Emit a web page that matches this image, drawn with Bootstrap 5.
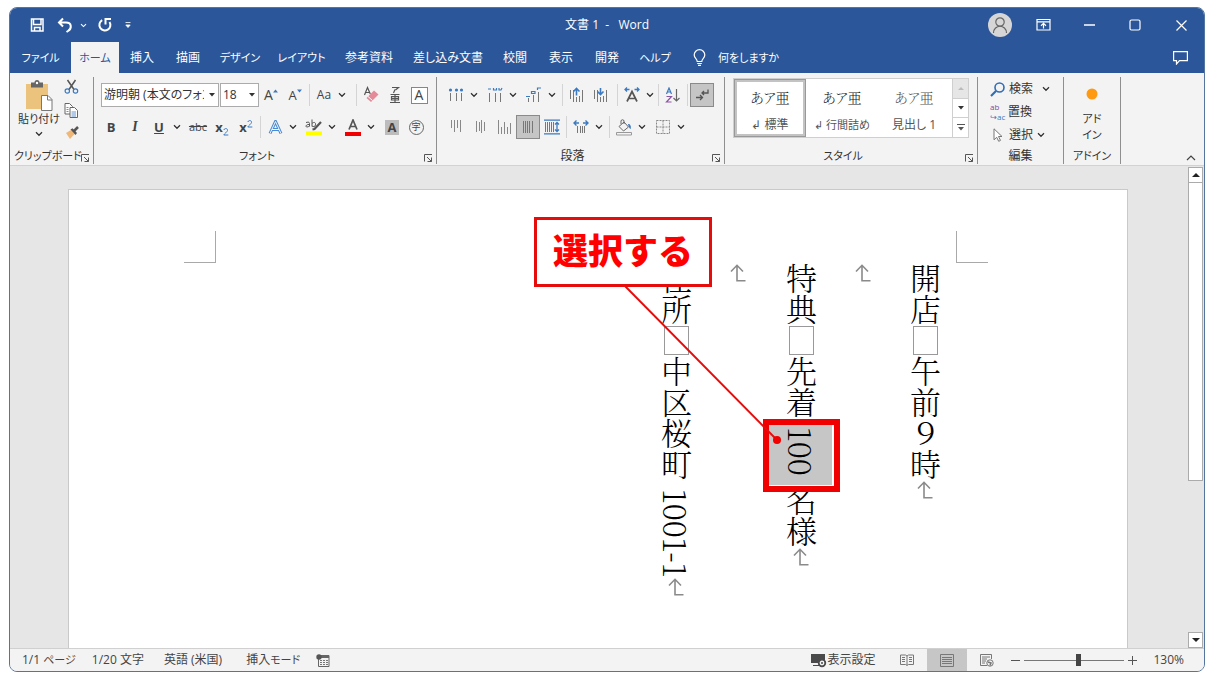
<!DOCTYPE html>
<html lang="ja">
<head>
<meta charset="utf-8">
<meta name="viewport" content="width=device-width, initial-scale=1">
<title>文書 1 - Word</title>
<link href="https://cdn.jsdelivr.net/npm/bootstrap@5.3.0/dist/css/bootstrap.min.css" rel="stylesheet">
<style>
:root{--word:#2b579a;--ink:#444;--blue:#3b7ac0}
body{font-family:"Open Sans","Noto Sans CJK JP",sans-serif;font-size:12px;line-height:16px;color:#333;background:#fff;font-feature-settings:"palt";padding:7px 9px 6px}
button{background:none;border:0;padding:0;color:inherit;font:inherit;font-feature-settings:inherit}
svg{display:block;flex:none}
.word-window{border:1px solid #54759f;border-radius:8px;overflow:hidden;background:#e6e6e6;flex:1 0 auto}
.title-row{height:34px;background:var(--word);color:#fff}
.title-side{flex:1 1 0}
.quick button{height:32px}
.win-btn{width:46px;height:32px}
.avatar{width:24px;height:24px;background:#d6d6d6}
.tab-strip{height:31px;background:var(--word);color:#fff}
.tab-grid{display:grid;grid-template-columns:61px 48px 46px 46px 58px 65px 70px 88px 46px 46px 46px 50px 30px auto}
.tab-grid button{white-space:nowrap}
.tab-grid .kana{font-size:11px}
.tab-grid .current{background:#f3f3f3;color:var(--word)}
.ribbon{height:93px;background:#f3f3f3;border-bottom:1px solid #d2d2d2;padding-top:4px}
.group{height:87px;border-right:1px solid #8f8f8f;position:relative;flex:none}
.g-clip{width:84px}.g-font{width:343px}.g-para{width:288px}.g-style{width:253px}.g-edit{width:86px}.g-add{width:57px}
.group-name{height:16px;line-height:16px;font-size:12px;white-space:nowrap}
.group-name.kana-s,.kana-s{font-size:11px}
.clip-tools{padding-top:2px}
.paste{width:42px}
.launcher{position:absolute;right:3px;bottom:1px}
.tool-rows{padding-top:6px}
.tool-row{height:24px;display:flex;align-items:center}
.tool{width:24px;height:24px;display:flex;align-items:center;justify-content:center;flex:none;white-space:nowrap;color:var(--ink)}
.chev{width:12px;height:24px;display:flex;align-items:center;justify-content:center;flex:none}
.chev+.tool{margin-left:3px}
.bar{width:1px;height:22px;background:#d4d4d4;margin:0 2px;flex:none}
.on{background:#c5c5c5;border:1px solid #8a8a8a}
.combo{position:relative;height:24px}
.combo select{appearance:none;width:100%;height:24px;border:1px solid #ababab;border-radius:0;background:#fff;padding:0 14px 0 2px;font:inherit;font-feature-settings:inherit;color:#333}
.combo svg{position:absolute;right:4px;top:10px;pointer-events:none}
.combo-font{width:118px;margin-left:2px}.combo-size{width:39px;margin-left:1px}
.latin-b{font-size:13px;font-weight:700}
.latin-l{font-size:14px}
.gallery{background:#fff;border:1px solid #cfcfcf;height:60px;margin-top:1px}
.style-item{width:72px;height:58px;color:#555;white-space:nowrap;padding-top:4px}
.style-item .sample{font-family:"Liberation Serif","Noto Serif CJK JP","Noto Sans CJK JP",serif;font-weight:300;font-size:14px;line-height:24px;display:block;color:#222}
.style-item .style-name{display:block;line-height:16px;margin-top:6px}
.style-item.picked{border:3px solid #c3c3c3;outline:1px solid #999;outline-offset:-1px}
.gal-scroll{width:16px;border-left:1px solid #cfcfcf}
.gal-scroll button{height:20px;flex:1;display:flex;align-items:center;justify-content:center}
.gal-scroll button+button{border-top:1px solid #cfcfcf}
.edit-row{height:23px;display:flex;align-items:center}
.swap{width:18px;font-size:8px;line-height:10px;text-align:left;color:#7b4a9a}
.work{flex:1 1 auto;min-height:482px}
.sheet{margin:23px 60px 0 58px;background:#fff;border:1px solid #c9c9c9;border-bottom:0;position:relative}
.crops{padding:41px 139px 0 115px}
.crop{width:32px;height:32px}
.crop-l{border-right:1px solid #a9a9a9;border-bottom:1px solid #a9a9a9}
.crop-r{border-left:1px solid #a9a9a9;border-bottom:1px solid #a9a9a9}
.story{position:relative;margin-right:171px}
.vertical{writing-mode:vertical-rl;font-family:"Noto Serif CJK JP","Noto Sans CJK JP",serif;font-weight:300;font-size:31px;line-height:62px;color:#000;font-feature-settings:normal;min-height:346px;white-space:nowrap}
.vertical p{margin:0}
.vertical svg{display:inline-block;vertical-align:baseline;margin-top:1px}
.wide{display:inline-block;width:25px;height:29px;border:1px solid #999;margin:1px 0;vertical-align:baseline}
.num-gap{margin-top:9px}
.picked-text{display:inline-block;position:relative;width:63px;height:60px;background:#c6c6c6;margin-top:7px;padding-top:2px;vertical-align:baseline}
.picked-text::after{content:"";position:absolute;top:-6px;left:-6px;right:-8px;bottom:-7px;border:6px solid #f00000}
.callout{position:absolute;right:244px;top:-46px;width:178px;height:70px;border:3px solid #e60c0c;background:#fff;color:#f00;font-family:"Noto Sans CJK JP",sans-serif;font-weight:900;font-size:35px;line-height:58px;text-align:center;font-feature-settings:normal;white-space:nowrap}
.leader{position:absolute;right:173px;top:23px}
.scroll-col{width:15px;margin:1px 1px 0 0;color:#222}
.scroll-col button{height:16px;background:#fff;border:1px solid #ababab;display:flex;align-items:center;justify-content:center}
.scroll-thumb{height:62%;background:#fff;border:1px solid #ababab;border-top:0}
.status{height:23px;background:#f3f3f3;border-top:1px solid #d0d0d0;color:#444;white-space:nowrap}
.view-btn{width:40px;height:22px;display:flex;align-items:center;justify-content:center}
.view-btn.shown{background:#c6c6c6}
.zoom-range{appearance:none;width:100px;height:14px;background:linear-gradient(#777,#777) center/100% 1px no-repeat}
.zoom-range::-webkit-slider-thumb{appearance:none;width:5px;height:12px;background:#444}
</style>
</head>
<body class="d-flex flex-column min-vh-100">
<svg width="0" height="0" class="position-absolute">
  <symbol id="cv" viewBox="0 0 8 6"><path d="M1 1.300 4 4.300 7 1.300" fill="none" stroke="currentColor" stroke-width="1.300"/></symbol>
  <symbol id="tri" viewBox="0 0 6 4"><path d="M0 0h6L3 3.500z" fill="currentColor"/></symbol>
  <symbol id="dl" viewBox="0 0 10 10"><path d="M1.500 8.500V1.500H9M4 4l4.500 4.500M8.500 4.500v4h-4" fill="none" stroke="#555"/></symbol>
  <symbol id="ret" viewBox="0 0 17 18"><path d="M15.500 16.800H7V1.500M1 7.500 7 1.300l6 6.200" fill="none" stroke="#8a8a8a" stroke-width="1.600"/></symbol>
</svg>
<div class="word-window d-flex flex-column">
  <header class="title-row d-flex align-items-center">
    <div class="quick title-side d-flex align-items-center">
      <button class="ms-3 px-1" aria-label="上書き保存"><svg width="15" height="14" viewBox="0 0 15 14" fill="none" stroke="#fff" stroke-width="1.500"><path d="M1.500 1h11.500v12h-11.500zM3.500 1.500v5h7.500v-5M4.500 13V9.500h5.500V13"/></svg></button>
      <button class="ms-1 ps-1" aria-label="元に戻す"><svg width="16" height="16" viewBox="0 0 16 16" fill="none" stroke="#fff" stroke-width="2"><path d="M6 1.500 2 5.500l4 4M2.500 5.500H9c6 0 6 6 2 8.500L9.500 15"/></svg></button>
      <button class="chev ms-1" aria-label="元に戻すの一覧"><svg width="7" height="5"><use href="#cv"/></svg></button>
      <button class="ms-1 ps-1" aria-label="繰り返し"><svg width="16" height="16" viewBox="0 0 16 16" fill="none" stroke="#fff" stroke-width="2"><path d="M5.200 3.200A5.500 5.500 0 1 0 12.500 5M8.500 7.500V2H14"/></svg></button>
      <button class="ms-2 px-1" aria-label="クイック アクセスのカスタマイズ"><svg width="6" height="6" viewBox="0 0 6 6"><path d="M.5.500h5M.8 3h4.400L3 5.500z" fill="#fff" stroke="#fff" stroke-width=".8"/></svg></button>
    </div>
    <div class="text-nowrap">文書 1 &nbsp;-&nbsp;&nbsp; Word</div>
    <div class="title-side d-flex align-items-center justify-content-end">
      <button class="avatar rounded-circle d-flex align-items-center justify-content-center me-2" aria-label="アカウント"><svg width="18" height="18" viewBox="0 0 18 18" fill="none" stroke="#666" stroke-width="1.200"><circle cx="9" cy="6" r="4.200"/><path d="M2.500 17c0-9 13-9 13 0"/></svg></button>
      <button class="win-btn d-flex align-items-center justify-content-center" aria-label="リボンの表示オプション"><svg width="15" height="12" viewBox="0 0 15 12" fill="none" stroke="#fff"><path d="M1 .5h13v10.500H1zM1 2.800h13M7.500 9.500V4.500M5 6.700l2.500-2.400L10 6.700" stroke-width="1.200"/></svg></button>
      <button class="win-btn d-flex align-items-center justify-content-center" aria-label="最小化"><svg width="11" height="2"><path d="M0 1h11" stroke="#fff" stroke-width="1.300"/></svg></button>
      <button class="win-btn d-flex align-items-center justify-content-center" aria-label="最大化"><svg width="12" height="12"><rect x="1" y="1" width="10" height="10" rx="1.500" fill="none" stroke="#fff" stroke-width="1.200"/></svg></button>
      <button class="win-btn d-flex align-items-center justify-content-center" aria-label="閉じる"><svg width="11" height="11"><path d="m.5.500 10 10m0-10-10 10" stroke="#fff" stroke-width="1.200"/></svg></button>
    </div>
  </header>
  <nav class="tab-strip d-flex justify-content-between">
    <div class="tab-grid">
      <button class="kana">ファイル</button><button class="kana current">ホーム</button><button>挿入</button><button>描画</button><button class="kana">デザイン</button><button class="kana">レイアウト</button><button>参考資料</button><button>差し込み文書</button><button>校閲</button><button>表示</button><button>開発</button><button class="kana">ヘルプ</button>
      <span class="d-flex align-items-center justify-content-center ps-2"><svg width="13" height="17" viewBox="0 0 13 17" fill="none" stroke="#fff" stroke-width="1.200"><path d="M4.200 12.500c0-2.500-3-3.200-3-6.500a5.200 5.200 0 0 1 10.600 0c0 3.300-3 4-3 6.500zM4.200 14.500h4.600M5 16.300h3"/></svg></span>
      <button class="ps-2 kana">何をしますか</button>
    </div>
    <button class="px-3" aria-label="コメント"><svg width="15" height="14" viewBox="0 0 15 14"><path d="M.6.600h13.800v9H6.500L3.500 13V9.600H.6z" fill="none" stroke="#fff" stroke-width="1.200"/></svg></button>
  </nav>
  <section class="ribbon d-flex">
    <div class="group g-clip d-flex flex-column justify-content-between">
      <div class="clip-tools d-flex">
        <button class="paste d-flex flex-column align-items-center ms-2 text-nowrap">
          <svg width="28" height="32" viewBox="0 0 28 32"><path d="M1 5h22v25H1z" fill="#ebc37c"/><path d="M6 3.500h3.500a2.500 2.500 0 0 1 5 0H18v5H6z" fill="#666"/><circle cx="12" cy="4" r="1.200" fill="#fff"/><path d="M16.500 16.500h6.500l4 4v11H16.500z" fill="#fff" stroke="#777"/><path d="M22.500 16.500v4.500H27" fill="none" stroke="#777"/></svg>
          <span class="kana-s">貼り付け</span>
          <svg class="mt-1" width="8" height="6"><use href="#cv"/></svg>
        </button>
        <div class="d-flex flex-column ms-1 gap-2">
          <button aria-label="切り取り"><svg width="15" height="16" viewBox="0 0 15 16" fill="none"><path d="M3.500 1 10 10.500M11.500 1 5 10.500" stroke="#555" stroke-width="1.500"/><circle cx="3.300" cy="12" r="2.200" stroke="#3b7ac0" stroke-width="1.200"/><circle cx="11.500" cy="12" r="2.200" stroke="#3b7ac0" stroke-width="1.200"/></svg></button>
          <button aria-label="コピー"><svg width="15" height="15" viewBox="0 0 15 15" fill="#fff" stroke="#666"><path d="M1 .5h4.500l3 3V11H1z"/><path d="M6 4.500h4.500l3 3v7H6z"/><path d="M2.500 4.500h2M2.500 6.500h2M2.500 8.500h2M7.500 9h4.500M7.500 11h4.500M7.500 13h4.500" stroke="#3b7ac0" stroke-width=".8"/></svg></button>
          <button aria-label="書式のコピー"><svg width="16" height="14" viewBox="0 0 16 14"><path d="m2 7 5-3 3.500 4L6 13z" fill="#f0b878"/><path d="m6.500 3.500 2-1.200L13 7l-1.500 2z" fill="#555"/><path d="m10 5 4-4" stroke="#555" stroke-width="2.500"/></svg></button>
        </div>
      </div>
      <div class="group-name kana-s ps-1">クリップボード</div>
      <button class="launcher" aria-label="クリップボードのオプション"><svg width="10" height="10"><use href="#dl"/></svg></button>
    </div>
    <div class="group g-font d-flex flex-column justify-content-between">
      <div class="tool-rows d-flex flex-column gap-2" style="padding-left:5px">
        <div class="tool-row">
          <div class="combo combo-font"><select aria-label="フォント"><option>游明朝 (本文のフォント)</option></select><svg width="6" height="4"><use href="#tri"/></svg></div>
          <div class="combo combo-size"><select aria-label="フォント サイズ"><option>18</option></select><svg width="6" height="4"><use href="#tri"/></svg></div>
          <button class="tool latin-l" aria-label="拡大">A<svg class="mb-2" width="5" height="4"><path d="M0 3.500 2.500.5 5 3.500z" fill="#3b7ac0"/></svg></button>
          <button class="tool latin-b fw-normal" aria-label="縮小">A<svg class="mb-2" width="5" height="4"><path d="M0 .5h5l-2.500 3z" fill="#3b7ac0"/></svg></button>
          <span class="bar"></span>
          <button class="tool">Aa</button><button class="chev" aria-label="文字種の一覧"><svg width="8" height="6"><use href="#cv"/></svg></button>
          <span class="bar ms-2"></span>
          <button class="tool" aria-label="書式のクリア"><svg width="18" height="18" viewBox="0 0 18 18"><path d="m2.500 9 3-7.500 2.800 6.500M3.500 6.500h4" fill="none" stroke="#555" stroke-width="1.200"/><path d="m12 4.500 4.500 4-7.500 7.500-4.500-4z" fill="#e58a98"/><path d="m6 10.500 4.500 4" stroke="#fff"/></svg></button>
          <button class="tool" aria-label="ルビ"><svg width="12" height="18" viewBox="0 0 12 18" fill="none" stroke="#555" stroke-width="1.200"><path d="M3 1.500h6.500L6.500 4M6 3.500 4.500 7M1.500 8.500h9M2.500 10.500h7v3.500h-7zM6 8v8M1 16.500h10M2.500 12.300h7"/></svg></button>
          <button class="tool" aria-label="囲み線"><span class="d-flex align-items-center justify-content-center latin-l" style="width:17px;height:17px;border:1px solid #5b8fc9;background:#fff">A</span></button>
        </div>
        <div class="tool-row">
          <button class="tool latin-b">B</button><button class="tool fw-bold fst-italic" style="font-family:'Liberation Serif',serif;font-size:14px">I</button><button class="tool latin-b text-decoration-underline">U</button><button class="chev" aria-label="下線の一覧"><svg width="8" height="6"><use href="#cv"/></svg></button>
          <button class="tool text-decoration-line-through kana-s">abc</button>
          <button class="tool latin-b">x<svg width="6" height="9" viewBox="0 0 6 9" class="mt-2"><path d="M.8 3C1.500.8 5 1.300 4.500 3.500 4 5.200 1.500 6.500.8 8h4.500" fill="none" stroke="#3b7ac0"/></svg></button>
          <button class="tool latin-b">x<svg width="6" height="9" viewBox="0 0 6 9" class="mb-2"><path d="M.8 3C1.500.8 5 1.300 4.500 3.500 4 5.200 1.500 6.500.8 8h4.500" fill="none" stroke="#3b7ac0"/></svg></button>
          <span class="bar"></span>
          <button class="tool" aria-label="文字の効果"><svg width="15" height="15" viewBox="0 0 15 15"><path d="m2 13.500 5.500-12 5.500 12M4 9.500h7" fill="none" stroke="#4a8ad0" stroke-width="3"/><path d="m2 13.500 5.500-12 5.500 12M4 9.500h7" fill="none" stroke="#eef5fc" stroke-width="1"/></svg></button><button class="chev" aria-label="効果の一覧"><svg width="8" height="6"><use href="#cv"/></svg></button>
          <button class="tool" aria-label="蛍光ペン"><svg width="18" height="17" viewBox="0 0 18 17"><path d="M1 3.500q3.500-1.500 3.500 1v3M4.500 5.500C1 5 0 8 2 8q2 0 2.500-1.500M7 .5v7M7 4.500c2-2 4-1 3.500 1.500C10 8 8 8 7 7" fill="none" stroke="#555"/><path d="m16 3-6.500 7-2 .5" stroke="#555" stroke-width="2.200" fill="none"/><path d="M1 12.500h16v4H1z" fill="#ff0"/></svg></button><button class="chev" aria-label="蛍光ペンの色"><svg width="8" height="6"><use href="#cv"/></svg></button>
          <button class="tool" aria-label="フォントの色"><svg width="16" height="17" viewBox="0 0 16 17"><path d="M4 10.500 8 1l4 9.500M5.300 7.500h5.400" fill="none" stroke="#555" stroke-width="1.700"/><path d="M0 13h16v4H0z" fill="#f00000"/></svg></button><button class="chev" aria-label="色の一覧"><svg width="8" height="6"><use href="#cv"/></svg></button>
          <button class="tool" aria-label="文字の網かけ"><span class="d-flex align-items-center justify-content-center latin-b" style="width:14px;height:15px;background:#bcbcbc">A</span></button>
          <button class="tool" aria-label="囲い文字"><span class="d-flex align-items-center justify-content-center rounded-circle" style="width:15px;height:15px;border:1px solid #666;font-size:9px">字</span></button>
        </div>
      </div>
      <div class="group-name text-center pe-3 kana-s">フォント</div>
      <button class="launcher" aria-label="フォントのオプション"><svg width="10" height="10"><use href="#dl"/></svg></button>
    </div>
    <div class="group g-para d-flex flex-column justify-content-between">
      <div class="tool-rows d-flex flex-column gap-2" style="padding-left:7px">
        <div class="tool-row">
          <button class="tool" aria-label="箇条書き"><svg width="16" height="16" viewBox="0 0 16 16"><path d="M2.500 6v8M8.500 6v8M13.500 6v8" stroke="#777"/><g fill="#3b7ac0"><circle cx="2.500" cy="3" r="1.600"/><circle cx="8.500" cy="3" r="1.600"/><circle cx="13.500" cy="3" r="1.600"/></g></svg></button><button class="chev" aria-label="箇条書きの一覧"><svg width="8" height="6"><use href="#cv"/></svg></button>
          <button class="tool" aria-label="段落番号"><svg width="16" height="16" viewBox="0 0 16 16" fill="none"><path d="M2.500 6v9M8.500 6v9M13.500 6v9" stroke="#777"/><path d="M1 2h3M6.500 1v2h3V1M12 1v2h2l1-2" stroke="#3b7ac0" stroke-width="1.200"/></svg></button><button class="chev" aria-label="段落番号の一覧"><svg width="8" height="6"><use href="#cv"/></svg></button>
          <button class="tool" aria-label="アウトライン"><svg width="16" height="16" viewBox="0 0 16 16" fill="none"><path d="M2.500 11v4M7.500 8v7M12.500 5v10" stroke="#777"/><path d="M0 9.500h4M5.500 4.500h3.500v2H5.500zM11.500 3V1H15" stroke="#3b7ac0" stroke-width="1.200"/></svg></button><button class="chev" aria-label="アウトラインの一覧"><svg width="8" height="6"><use href="#cv"/></svg></button>
          <span class="bar ms-1"></span>
          <button class="tool" aria-label="インデントを減らす"><svg width="16" height="17" viewBox="0 0 16 17" fill="none"><path d="M1.500 3v9M4.500 3v12M7.500 10v5M10.500 9v6M13.500 3v12" stroke="#777"/><path d="M7.500 8.500V2M4.500 4.500l3-3 3 3" stroke="#3b7ac0" stroke-width="1.600"/></svg></button>
          <button class="tool" aria-label="インデントを増やす"><svg width="16" height="17" viewBox="0 0 16 17" fill="none"><path d="M1.500 3v9M4.500 3v12M7.500 10v5M10.500 9v6M13.500 3v12" stroke="#777"/><path d="M7.500 1v6.500M4.500 4.500l3 3 3-3" stroke="#3b7ac0" stroke-width="1.600"/></svg></button>
          <span class="bar ms-1"></span>
          <button class="tool" aria-label="拡張書式"><svg width="16" height="16" viewBox="0 0 16 16" fill="none"><path d="m3 14.500 5-10 5 10M5 11.500h6" stroke="#555" stroke-width="1.700"/><path d="M1 2.500h4.500M3 .5l-2 2 2 2M10.500 2.500H15M13 .5l2 2-2 2" stroke="#3b7ac0" stroke-width="1.300"/></svg></button><button class="chev" aria-label="拡張書式の一覧"><svg width="8" height="6"><use href="#cv"/></svg></button>
          <span class="bar"></span>
          <button class="tool" aria-label="並べ替え"><svg width="16" height="16" viewBox="0 0 16 16" fill="none"><path d="m1.500 7 2.500-6 2.500 6M2.500 5h3" stroke="#3b7ac0" stroke-width="1.200"/><path d="M1.500 9.500h5L1.500 15h5" stroke="#8b56a5" stroke-width="1.200"/><path d="M11.500 2v12M8.500 11l3 3 3-3" stroke="#666" stroke-width="1.200"/></svg></button>
          <span class="bar"></span>
          <button class="tool on" aria-label="編集記号の表示"><svg width="14" height="14" viewBox="0 0 14 14" fill="none" stroke="#555" stroke-width="1.300"><path d="M13 1.500V5H7M9 3 7 5l2 2M1 9.500h6M5 7l2.500 2.500L5 12"/></svg></button>
        </div>
        <div class="tool-row">
          <button class="tool" aria-label="上揃え"><svg width="14" height="16" stroke="#888"><path d="M2.500 1v8M5.500 1v12M8.500 1v8M11.500 1v12"/></svg></button>
          <button class="tool" aria-label="上下中央揃え"><svg width="14" height="16" stroke="#888"><path d="M3.500 2v11M6.500 3v9M8.500 1v13M11.500 3v9"/></svg></button>
          <button class="tool" aria-label="下揃え"><svg width="14" height="16" stroke="#888"><path d="M1.500 1v14M4.500 8v7M7.500 3v12M10.500 8v7M13.500 4v11"/></svg></button>
          <button class="tool on" aria-label="両端揃え"><svg width="12" height="16" stroke="#777"><path d="M1.500 2v12M3.500 2v12M5.500 2v12M7.500 2v12M10.500 2v12"/></svg></button>
          <button class="tool" aria-label="均等割り付け"><svg width="16" height="16" viewBox="0 0 16 16" fill="none"><path d="M1.500 3v10M3.500 3v10M5.500 3v10M7.500 3v10M9.500 3v10" stroke="#777"/><path d="M0 1.200h16M0 14.800h16M13 4v8M11 5.500l2-2 2 2M11 10.500l2 2 2-2" stroke="#3b7ac0" stroke-width="1.300"/></svg></button>
          <span class="bar"></span>
          <button class="tool" aria-label="行間"><svg width="16" height="16" viewBox="0 0 16 16" fill="none"><path d="M4.500 7v7M7.500 7v7M9.500 7v7M11.500 7v7" stroke="#777"/><path d="M1 4h5M3.500 1.500 1 4l2.500 2.500M10 4h5M12.500 1.500 15 4l-2.500 2.500" stroke="#3b7ac0" stroke-width="1.400"/></svg></button><button class="chev" aria-label="行間の一覧"><svg width="8" height="6"><use href="#cv"/></svg></button>
          <span class="bar ms-1"></span>
          <button class="tool" aria-label="塗りつぶし"><svg width="18" height="17" viewBox="0 0 18 17" fill="none"><path d="m4 7.500 5-4.500 4.500 5-5 4zM6 5V1.500q1.500-1.500 3 0V5" stroke="#666"/><path d="M13 5c2.500 0 3 2 2.800 5-1.500-.5-2-2-2.800-5z" fill="#3b7ac0"/><path d="M1.500 13.500h15v2.500h-15z" stroke="#999"/></svg></button><button class="chev" aria-label="塗りつぶしの色"><svg width="8" height="6"><use href="#cv"/></svg></button>
          <button class="tool" aria-label="罫線"><svg width="14" height="14"><path d="M.5.500h13v13H.5zM7 .5v13M.5 7h13" fill="none" stroke="#888" stroke-dasharray="2 1"/></svg></button><button class="chev" aria-label="罫線の一覧"><svg width="8" height="6"><use href="#cv"/></svg></button>
        </div>
      </div>
      <div class="group-name text-center pe-3">段落</div>
      <button class="launcher" aria-label="段落のオプション"><svg width="10" height="10"><use href="#dl"/></svg></button>
    </div>
    <div class="group g-style d-flex flex-column justify-content-between">
      <div class="gallery d-flex mx-2">
        <button class="style-item picked"><span class="sample">あア亜</span><span class="style-name">↲ 標準</span></button>
        <button class="style-item"><span class="sample">あア亜</span><span class="style-name kana-s">↲ 行間詰め</span></button>
        <button class="style-item"><span class="sample" style="color:#555">あア亜</span><span class="style-name">見出し 1</span></button>
        <div class="gal-scroll d-flex flex-column ms-auto">
          <button style="background:#e6e6e6" aria-label="前の行"><svg width="6" height="3"><path d="M0 3h6L3 0z" fill="#bbb"/></svg></button>
          <button aria-label="次の行"><svg width="6" height="4"><use href="#tri"/></svg></button>
          <button aria-label="その他"><svg width="8" height="7"><path d="M0 .5h8" stroke="#555"/><path d="M1 3h6L4 6.500z" fill="#555"/></svg></button>
        </div>
      </div>
      <div class="group-name text-center pe-3 kana-s">スタイル</div>
      <button class="launcher" aria-label="スタイルのオプション"><svg width="10" height="10"><use href="#dl"/></svg></button>
    </div>
    <div class="group g-edit d-flex flex-column justify-content-between">
      <div class="ps-2 ms-1">
        <button class="edit-row"><svg width="19" height="16" viewBox="0 0 19 16" fill="none" stroke="#2f6db5"><circle cx="9.500" cy="6.500" r="4.500" stroke-width="1.600"/><path d="m6 10-5 5" stroke-width="2.200"/></svg>検索<svg class="ms-2" width="14" height="6" viewBox="0 0 14 6"><path d="m2 1.300 3 3 3-3" fill="none" stroke="currentColor" stroke-width="1.300"/></svg></button>
        <button class="edit-row"><span class="swap">ab<br><span style="color:var(--blue)">↪ac</span></span><span>置換</span></button>
        <button class="edit-row"><svg width="19" height="14" viewBox="0 0 19 14"><path d="M4 .8v11l2.700-2.500 2 4 1.800-.9-2-3.900H12z" fill="#fff" stroke="#777"/></svg>選択<svg class="ms-1" width="8" height="6"><use href="#cv"/></svg></button>
      </div>
      <div class="group-name text-center">編集</div>
    </div>
    <div class="group g-add d-flex flex-column justify-content-between align-items-center">
      <button class="d-flex flex-column align-items-center pt-2 kana-s"><svg width="14" height="18"><circle cx="7" cy="9" r="5.500" fill="#ff9a10"/></svg><span class="mt-2">アド</span><span>イン</span></button>
      <div class="group-name kana-s">アドイン</div>
    </div>
    <button class="ms-auto align-self-end pe-2 pb-1" aria-label="リボンを折りたたむ"><svg width="10" height="6"><path d="m1 5 4-4 4 4" fill="none" stroke="#444" stroke-width="1.200"/></svg></button>
  </section>
  <main class="work d-flex">
    <div class="sheet flex-grow-1">
      <div class="crops d-flex justify-content-between"><div class="crop crop-l"></div><div class="crop crop-r"></div></div>
      <div class="story d-flex justify-content-end">
        <div class="vertical">
          <p>開店<span class="wide"></span>午前９時<svg width="17" height="18"><use href="#ret"/></svg></p>
          <p><svg width="17" height="18"><use href="#ret"/></svg></p>
          <p>特典<span class="wide"></span>先着<span class="picked-text">100</span>名様<svg width="17" height="18"><use href="#ret"/></svg></p>
          <p><svg width="17" height="18"><use href="#ret"/></svg></p>
          <p>住所<span class="wide"></span>中区桜町<span class="num-gap">1001-1</span><svg width="17" height="18"><use href="#ret"/></svg></p>
        </div>
        <svg class="leader" width="160" height="160" viewBox="0 0 160 160"><path d="m2 0 152 154" stroke="#e60c0c" stroke-width="2"/><circle cx="154" cy="154" r="4" fill="#f00000"/></svg>
        <div class="callout">選択する</div>
      </div>
    </div>
    <div class="scroll-col d-flex flex-column">
      <button aria-label="上へ"><svg width="8" height="4"><path d="M0 4h8L4 0z" fill="#222"/></svg></button>
      <div class="scroll-thumb"></div>
      <button class="mt-auto" aria-label="下へ"><svg width="8" height="4"><path d="M0 0h8L4 4z" fill="#222"/></svg></button>
    </div>
  </main>
  <footer class="status d-flex align-items-center">
    <span class="ms-2 ps-1">1/1 <span class="kana-s">ページ</span></span>
    <span class="ms-3">1/20 文字</span>
    <span class="ms-3 ps-1">英語 (米国)</span>
    <span class="ms-3 ps-2">挿入<span class="kana-s">モード</span></span>
    <button class="ms-3" aria-label="マクロの記録"><svg width="14" height="13" viewBox="0 0 14 13"><path d="M2.500 4v8.500h10.500V1.500H6" fill="none" stroke="#666"/><path d="M5 1h8v3H5z" fill="#666"/><circle cx="3" cy="3" r="2.700" fill="#555"/><path d="M4 6.500h8M4 8.500h8M4 10.500h8" stroke="#777" stroke-dasharray="2 1"/></svg></button>
    <button class="d-flex align-items-center ms-auto pe-1"><svg width="16" height="15" viewBox="0 0 16 15"><path d="M0 1h14v9H0zM2 12h6v1H2z" fill="#4a4a4a"/><circle cx="11" cy="10" r="3.300" fill="#f3f3f3" stroke="#4a4a4a" stroke-width="1.800"/><circle cx="11" cy="10" r="1" fill="#4a4a4a"/></svg>表示設定</button>
    <button class="view-btn ms-2" aria-label="閲覧モード"><svg width="14" height="12" viewBox="0 0 14 12" fill="none" stroke="#777"><path d="M.5 1h5L7 2l1.500-1h5v9.500h-5L7 11.500l-1.500-1h-5zM7 2v9M2 3.500h3M2 5.500h3M2 7.500h3M9 3.500h3M9 5.500h3M9 7.500h3"/></svg></button>
    <button class="view-btn shown" aria-label="印刷レイアウト"><svg width="14" height="13" fill="none" stroke="#777"><path d="M.5.500h13v12H.5zM2 3.500h10M2 5.500h10M2 7.500h10M2 9.500h10"/></svg></button>
    <button class="view-btn" aria-label="Web レイアウト"><svg width="14" height="13" viewBox="0 0 14 13" fill="none" stroke="#777"><path d="M7 11.500H.5V.5h11V5M2 3h8M2 5h5M2 7h4M2 9h3"/><circle cx="10" cy="9" r="3.200"/><path d="M8 8l3 1-1 2.500" stroke-width="1.500"/></svg></button>
    <button class="ms-1" aria-label="縮小"><svg width="9" height="9"><path d="M0 4.500h9" stroke="#555"/></svg></button>
    <input class="zoom-range mx-1" type="range" min="0" max="100" value="54" aria-label="ズーム">
    <button aria-label="拡大"><svg width="9" height="9"><path d="M0 4.500h9M4.500 0v9" stroke="#555"/></svg></button>
    <button class="ms-3 me-3 pe-1">130%</button>
  </footer>
</div>
<script src="https://cdn.jsdelivr.net/npm/bootstrap@5.3.0/dist/js/bootstrap.bundle.min.js"></script>
</body>
</html>
